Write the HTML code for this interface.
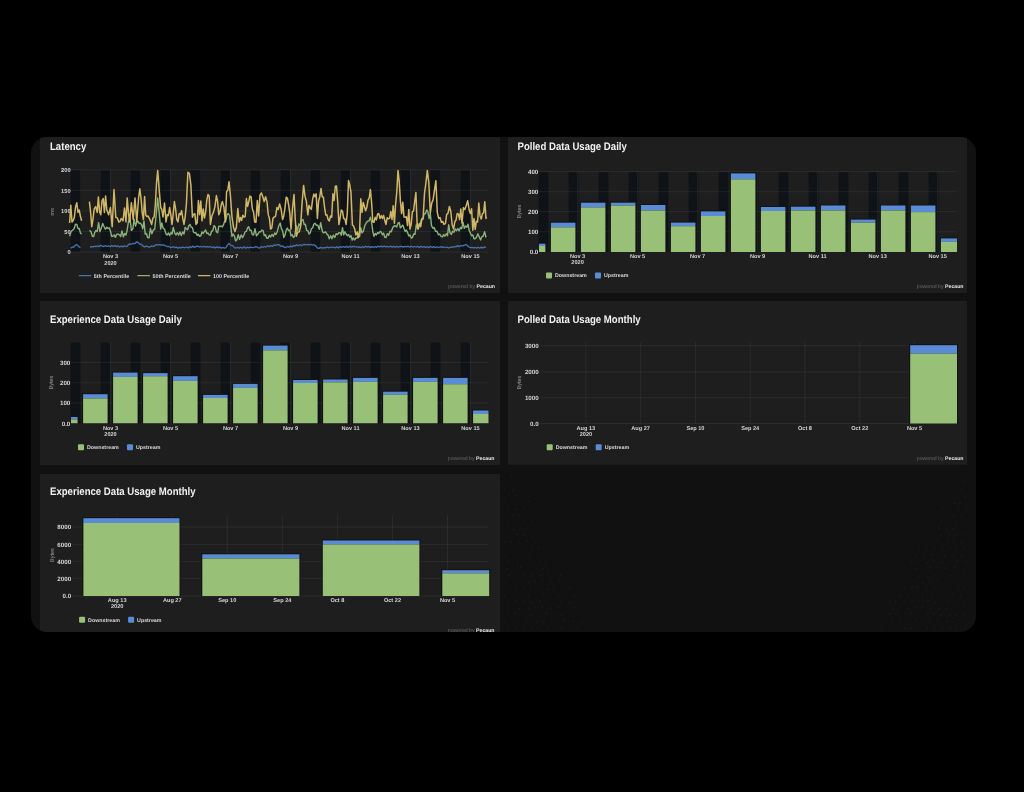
<!DOCTYPE html>
<html><head><meta charset="utf-8"><title>Dashboard</title>
<style>html,body{margin:0;padding:0;background:#000;width:1024px;height:792px;overflow:hidden}svg{display:block;filter:blur(0.6px)}text{text-rendering:geometricPrecision}</style>
</head><body>
<svg width="1024" height="792" viewBox="0 0 1024 792" font-family='"Liberation Sans", sans-serif'><defs><clipPath id="cc"><rect x="31" y="137" width="945" height="495" rx="16" ry="16"/></clipPath></defs><rect x="0.00" y="0.00" width="1024.00" height="792.00" fill="#000000" /><g clip-path="url(#cc)"><rect x="31.00" y="137.00" width="945.00" height="495.00" fill="#111111" /><g fill="#1d1d1d"><circle cx="511.8" cy="476.0" r="0.8"/><circle cx="509.3" cy="481.6" r="0.8"/><circle cx="964.7" cy="481.5" r="0.8"/><circle cx="503.9" cy="489.5" r="0.8"/><circle cx="513.3" cy="490.3" r="0.8"/><circle cx="961.4" cy="488.8" r="0.8"/><circle cx="509.4" cy="494.9" r="0.8"/><circle cx="516.5" cy="495.6" r="0.8"/><circle cx="950.8" cy="496.1" r="0.8"/><circle cx="965.1" cy="496.4" r="0.8"/><circle cx="504.3" cy="502.1" r="0.8"/><circle cx="528.5" cy="501.4" r="0.8"/><circle cx="954.0" cy="503.4" r="0.8"/><circle cx="960.0" cy="503.3" r="0.8"/><circle cx="508.8" cy="509.4" r="0.8"/><circle cx="515.7" cy="509.4" r="0.8"/><circle cx="524.5" cy="508.5" r="0.8"/><circle cx="942.6" cy="508.5" r="0.8"/><circle cx="958.1" cy="510.0" r="0.8"/><circle cx="965.9" cy="509.0" r="0.8"/><circle cx="512.6" cy="515.1" r="0.8"/><circle cx="519.0" cy="515.5" r="0.8"/><circle cx="528.1" cy="514.8" r="0.8"/><circle cx="946.2" cy="514.7" r="0.8"/><circle cx="954.1" cy="516.4" r="0.8"/><circle cx="961.6" cy="516.6" r="0.8"/><circle cx="507.9" cy="522.7" r="0.8"/><circle cx="517.2" cy="521.5" r="0.8"/><circle cx="523.0" cy="521.6" r="0.8"/><circle cx="532.6" cy="521.9" r="0.8"/><circle cx="941.5" cy="521.8" r="0.8"/><circle cx="956.9" cy="522.4" r="0.8"/><circle cx="965.8" cy="521.7" r="0.8"/><circle cx="513.6" cy="529.8" r="0.8"/><circle cx="520.1" cy="528.0" r="0.8"/><circle cx="528.1" cy="528.1" r="0.8"/><circle cx="930.7" cy="528.2" r="0.8"/><circle cx="939.0" cy="528.0" r="0.8"/><circle cx="946.3" cy="529.6" r="0.8"/><circle cx="953.2" cy="528.5" r="0.8"/><circle cx="517.0" cy="534.3" r="0.8"/><circle cx="523.7" cy="534.9" r="0.8"/><circle cx="532.8" cy="536.0" r="0.8"/><circle cx="941.0" cy="535.2" r="0.8"/><circle cx="949.3" cy="535.0" r="0.8"/><circle cx="956.4" cy="535.2" r="0.8"/><circle cx="965.2" cy="534.8" r="0.8"/><circle cx="504.2" cy="542.2" r="0.8"/><circle cx="511.5" cy="541.7" r="0.8"/><circle cx="519.1" cy="542.0" r="0.8"/><circle cx="527.2" cy="540.9" r="0.8"/><circle cx="534.8" cy="542.4" r="0.8"/><circle cx="544.1" cy="541.7" r="0.8"/><circle cx="937.3" cy="540.9" r="0.8"/><circle cx="947.0" cy="541.1" r="0.8"/><circle cx="953.5" cy="542.0" r="0.8"/><circle cx="961.7" cy="542.8" r="0.8"/><circle cx="509.4" cy="549.8" r="0.8"/><circle cx="517.1" cy="547.8" r="0.8"/><circle cx="531.2" cy="547.4" r="0.8"/><circle cx="538.7" cy="547.9" r="0.8"/><circle cx="919.6" cy="549.7" r="0.8"/><circle cx="926.5" cy="549.8" r="0.8"/><circle cx="934.1" cy="548.9" r="0.8"/><circle cx="942.9" cy="549.5" r="0.8"/><circle cx="949.8" cy="547.7" r="0.8"/><circle cx="957.1" cy="549.0" r="0.8"/><circle cx="964.2" cy="548.8" r="0.8"/><circle cx="505.3" cy="555.1" r="0.8"/><circle cx="529.0" cy="555.0" r="0.8"/><circle cx="915.3" cy="556.3" r="0.8"/><circle cx="923.4" cy="554.6" r="0.8"/><circle cx="931.5" cy="554.6" r="0.8"/><circle cx="939.0" cy="556.0" r="0.8"/><circle cx="944.8" cy="556.2" r="0.8"/><circle cx="953.1" cy="555.7" r="0.8"/><circle cx="962.0" cy="556.3" r="0.8"/><circle cx="508.5" cy="561.7" r="0.8"/><circle cx="517.5" cy="562.9" r="0.8"/><circle cx="539.6" cy="561.1" r="0.8"/><circle cx="545.9" cy="561.5" r="0.8"/><circle cx="911.6" cy="561.2" r="0.8"/><circle cx="918.0" cy="561.6" r="0.8"/><circle cx="927.0" cy="562.9" r="0.8"/><circle cx="934.1" cy="561.3" r="0.8"/><circle cx="941.6" cy="561.8" r="0.8"/><circle cx="956.6" cy="561.2" r="0.8"/><circle cx="965.7" cy="561.6" r="0.8"/><circle cx="506.2" cy="569.2" r="0.8"/><circle cx="520.8" cy="567.3" r="0.8"/><circle cx="543.6" cy="568.2" r="0.8"/><circle cx="558.8" cy="568.1" r="0.8"/><circle cx="916.5" cy="568.9" r="0.8"/><circle cx="930.0" cy="567.2" r="0.8"/><circle cx="937.7" cy="567.8" r="0.8"/><circle cx="945.3" cy="567.9" r="0.8"/><circle cx="954.3" cy="567.6" r="0.8"/><circle cx="508.9" cy="575.4" r="0.8"/><circle cx="515.3" cy="576.0" r="0.8"/><circle cx="523.9" cy="574.7" r="0.8"/><circle cx="531.8" cy="574.6" r="0.8"/><circle cx="540.3" cy="575.4" r="0.8"/><circle cx="547.0" cy="574.1" r="0.8"/><circle cx="560.9" cy="575.2" r="0.8"/><circle cx="919.0" cy="576.2" r="0.8"/><circle cx="927.8" cy="576.2" r="0.8"/><circle cx="935.1" cy="575.7" r="0.8"/><circle cx="949.8" cy="575.6" r="0.8"/><circle cx="964.5" cy="574.0" r="0.8"/><circle cx="505.9" cy="582.7" r="0.8"/><circle cx="528.7" cy="582.1" r="0.8"/><circle cx="534.5" cy="581.1" r="0.8"/><circle cx="542.6" cy="580.5" r="0.8"/><circle cx="550.7" cy="581.7" r="0.8"/><circle cx="559.3" cy="580.6" r="0.8"/><circle cx="923.1" cy="582.7" r="0.8"/><circle cx="930.1" cy="582.4" r="0.8"/><circle cx="937.5" cy="580.9" r="0.8"/><circle cx="515.8" cy="589.2" r="0.8"/><circle cx="524.7" cy="588.5" r="0.8"/><circle cx="530.6" cy="588.6" r="0.8"/><circle cx="547.4" cy="589.4" r="0.8"/><circle cx="553.3" cy="589.1" r="0.8"/><circle cx="569.6" cy="587.9" r="0.8"/><circle cx="904.4" cy="588.6" r="0.8"/><circle cx="912.1" cy="587.3" r="0.8"/><circle cx="918.0" cy="587.2" r="0.8"/><circle cx="925.9" cy="589.3" r="0.8"/><circle cx="934.6" cy="587.8" r="0.8"/><circle cx="941.5" cy="587.5" r="0.8"/><circle cx="949.4" cy="588.0" r="0.8"/><circle cx="957.9" cy="588.7" r="0.8"/><circle cx="964.6" cy="588.1" r="0.8"/><circle cx="504.5" cy="595.5" r="0.8"/><circle cx="528.2" cy="595.4" r="0.8"/><circle cx="543.4" cy="594.1" r="0.8"/><circle cx="558.0" cy="595.4" r="0.8"/><circle cx="565.6" cy="596.0" r="0.8"/><circle cx="573.6" cy="595.6" r="0.8"/><circle cx="901.0" cy="595.8" r="0.8"/><circle cx="907.5" cy="595.3" r="0.8"/><circle cx="922.7" cy="594.1" r="0.8"/><circle cx="931.1" cy="593.8" r="0.8"/><circle cx="938.4" cy="593.8" r="0.8"/><circle cx="947.0" cy="595.0" r="0.8"/><circle cx="952.4" cy="593.7" r="0.8"/><circle cx="960.5" cy="595.2" r="0.8"/><circle cx="508.3" cy="601.5" r="0.8"/><circle cx="515.9" cy="600.8" r="0.8"/><circle cx="523.4" cy="600.5" r="0.8"/><circle cx="531.1" cy="602.3" r="0.8"/><circle cx="539.7" cy="601.4" r="0.8"/><circle cx="546.7" cy="601.5" r="0.8"/><circle cx="560.9" cy="602.1" r="0.8"/><circle cx="570.5" cy="602.2" r="0.8"/><circle cx="889.8" cy="601.8" r="0.8"/><circle cx="895.8" cy="600.9" r="0.8"/><circle cx="905.2" cy="601.8" r="0.8"/><circle cx="912.1" cy="601.4" r="0.8"/><circle cx="918.9" cy="601.5" r="0.8"/><circle cx="928.0" cy="601.1" r="0.8"/><circle cx="934.6" cy="602.4" r="0.8"/><circle cx="942.0" cy="602.0" r="0.8"/><circle cx="948.9" cy="601.9" r="0.8"/><circle cx="964.7" cy="602.2" r="0.8"/><circle cx="519.1" cy="608.9" r="0.8"/><circle cx="528.6" cy="608.2" r="0.8"/><circle cx="534.9" cy="607.3" r="0.8"/><circle cx="542.2" cy="607.2" r="0.8"/><circle cx="550.8" cy="608.0" r="0.8"/><circle cx="558.5" cy="607.3" r="0.8"/><circle cx="574.5" cy="607.1" r="0.8"/><circle cx="893.0" cy="609.1" r="0.8"/><circle cx="899.1" cy="607.9" r="0.8"/><circle cx="907.9" cy="608.9" r="0.8"/><circle cx="915.7" cy="606.9" r="0.8"/><circle cx="922.2" cy="607.0" r="0.8"/><circle cx="930.8" cy="608.8" r="0.8"/><circle cx="938.6" cy="608.5" r="0.8"/><circle cx="946.0" cy="608.9" r="0.8"/><circle cx="508.7" cy="614.0" r="0.8"/><circle cx="515.3" cy="613.7" r="0.8"/><circle cx="531.6" cy="615.3" r="0.8"/><circle cx="539.0" cy="614.6" r="0.8"/><circle cx="546.6" cy="613.6" r="0.8"/><circle cx="554.2" cy="614.8" r="0.8"/><circle cx="561.7" cy="615.5" r="0.8"/><circle cx="889.6" cy="614.3" r="0.8"/><circle cx="896.0" cy="613.6" r="0.8"/><circle cx="910.7" cy="613.7" r="0.8"/><circle cx="927.4" cy="613.9" r="0.8"/><circle cx="934.3" cy="613.9" r="0.8"/><circle cx="941.5" cy="615.1" r="0.8"/><circle cx="950.3" cy="614.2" r="0.8"/><circle cx="956.2" cy="615.3" r="0.8"/><circle cx="964.7" cy="614.8" r="0.8"/><circle cx="504.6" cy="622.3" r="0.8"/><circle cx="526.8" cy="621.0" r="0.8"/><circle cx="536.4" cy="622.3" r="0.8"/><circle cx="543.7" cy="621.6" r="0.8"/><circle cx="550.6" cy="621.7" r="0.8"/><circle cx="564.7" cy="620.4" r="0.8"/><circle cx="573.3" cy="621.4" r="0.8"/><circle cx="581.8" cy="621.9" r="0.8"/><circle cx="885.6" cy="621.8" r="0.8"/><circle cx="892.3" cy="621.1" r="0.8"/><circle cx="900.9" cy="622.2" r="0.8"/><circle cx="916.6" cy="620.5" r="0.8"/><circle cx="922.5" cy="621.1" r="0.8"/><circle cx="929.9" cy="622.2" r="0.8"/><circle cx="937.1" cy="620.7" r="0.8"/><circle cx="946.9" cy="621.4" r="0.8"/><circle cx="952.8" cy="621.8" r="0.8"/><circle cx="960.0" cy="620.1" r="0.8"/><circle cx="509.0" cy="627.3" r="0.8"/><circle cx="516.4" cy="627.5" r="0.8"/><circle cx="523.5" cy="626.9" r="0.8"/><circle cx="532.5" cy="627.5" r="0.8"/><circle cx="538.2" cy="628.5" r="0.8"/><circle cx="547.4" cy="627.8" r="0.8"/><circle cx="562.1" cy="628.0" r="0.8"/><circle cx="577.4" cy="628.8" r="0.8"/><circle cx="882.3" cy="628.9" r="0.8"/><circle cx="904.6" cy="628.6" r="0.8"/><circle cx="910.5" cy="628.4" r="0.8"/><circle cx="927.2" cy="628.2" r="0.8"/><circle cx="934.7" cy="626.8" r="0.8"/><circle cx="942.7" cy="627.7" r="0.8"/><circle cx="950.0" cy="627.9" r="0.8"/><circle cx="957.0" cy="627.2" r="0.8"/><circle cx="964.6" cy="628.3" r="0.8"/></g><rect x="40.00" y="129.50" width="460.00" height="163.50" fill="#1e1e1e" /><rect x="508.00" y="129.50" width="459.00" height="163.50" fill="#1e1e1e" /><rect x="40.00" y="301.00" width="460.00" height="164.00" fill="#1e1e1e" /><rect x="508.00" y="301.00" width="459.00" height="163.80" fill="#1e1e1e" /><rect x="40.00" y="474.00" width="460.00" height="164.00" fill="#1e1e1e" /><text transform="translate(50.00,150.00) scale(1,1.14)" x="0" y="0" font-size="9.6" fill="#f2f2f2" font-weight="bold">Latency</text><text transform="translate(517.50,149.90) scale(1,1.14)" x="0" y="0" font-size="9.6" fill="#f2f2f2" font-weight="bold">Polled Data Usage Daily</text><text transform="translate(50.00,322.80) scale(1,1.14)" x="0" y="0" font-size="9.6" fill="#f2f2f2" font-weight="bold">Experience Data Usage Daily</text><text transform="translate(517.50,322.80) scale(1,1.14)" x="0" y="0" font-size="9.6" fill="#f2f2f2" font-weight="bold">Polled Data Usage Monthly</text><text transform="translate(50.00,494.80) scale(1,1.14)" x="0" y="0" font-size="9.6" fill="#f2f2f2" font-weight="bold">Experience Data Usage Monthly</text><text x="495.00" y="288.00" font-size="5.2" text-anchor="end"><tspan fill="#6a6a6a">powered by </tspan><tspan fill="#e8e8e8" font-weight="bold">Pecaun</tspan></text><text x="963.50" y="288.00" font-size="5.2" text-anchor="end"><tspan fill="#6a6a6a">powered by </tspan><tspan fill="#e8e8e8" font-weight="bold">Pecaun</tspan></text><text x="494.50" y="459.80" font-size="5.2" text-anchor="end"><tspan fill="#6a6a6a">powered by </tspan><tspan fill="#e8e8e8" font-weight="bold">Pecaun</tspan></text><text x="963.50" y="459.80" font-size="5.2" text-anchor="end"><tspan fill="#6a6a6a">powered by </tspan><tspan fill="#e8e8e8" font-weight="bold">Pecaun</tspan></text><text x="494.50" y="632.00" font-size="5.2" text-anchor="end"><tspan fill="#6a6a6a">powered by </tspan><tspan fill="#e8e8e8" font-weight="bold">Pecaun</tspan></text><rect x="70.70" y="170.40" width="9.40" height="81.60" fill="#0f1318" /><rect x="100.70" y="170.40" width="9.40" height="81.60" fill="#0f1318" /><rect x="130.70" y="170.40" width="9.40" height="81.60" fill="#0f1318" /><rect x="160.70" y="170.40" width="9.40" height="81.60" fill="#0f1318" /><rect x="190.70" y="170.40" width="9.40" height="81.60" fill="#0f1318" /><rect x="220.70" y="170.40" width="9.40" height="81.60" fill="#0f1318" /><rect x="250.70" y="170.40" width="9.40" height="81.60" fill="#0f1318" /><rect x="280.70" y="170.40" width="9.40" height="81.60" fill="#0f1318" /><rect x="310.70" y="170.40" width="9.40" height="81.60" fill="#0f1318" /><rect x="340.70" y="170.40" width="9.40" height="81.60" fill="#0f1318" /><rect x="370.70" y="170.40" width="9.40" height="81.60" fill="#0f1318" /><rect x="400.70" y="170.40" width="9.40" height="81.60" fill="#0f1318" /><rect x="430.70" y="170.40" width="9.40" height="81.60" fill="#0f1318" /><rect x="460.70" y="170.40" width="9.40" height="81.60" fill="#0f1318" /><line x1="68.50" y1="231.45" x2="488.00" y2="231.45" stroke="rgba(215,235,215,0.085)" stroke-width="0.8" /><line x1="68.50" y1="210.90" x2="488.00" y2="210.90" stroke="rgba(215,235,215,0.085)" stroke-width="0.8" /><line x1="68.50" y1="190.35" x2="488.00" y2="190.35" stroke="rgba(215,235,215,0.085)" stroke-width="0.8" /><line x1="68.50" y1="169.80" x2="488.00" y2="169.80" stroke="rgba(215,235,215,0.085)" stroke-width="0.8" /><line x1="110.50" y1="169.80" x2="110.50" y2="252.00" stroke="rgba(215,235,215,0.085)" stroke-width="0.8" /><line x1="170.50" y1="169.80" x2="170.50" y2="252.00" stroke="rgba(215,235,215,0.085)" stroke-width="0.8" /><line x1="230.50" y1="169.80" x2="230.50" y2="252.00" stroke="rgba(215,235,215,0.085)" stroke-width="0.8" /><line x1="290.50" y1="169.80" x2="290.50" y2="252.00" stroke="rgba(215,235,215,0.085)" stroke-width="0.8" /><line x1="350.50" y1="169.80" x2="350.50" y2="252.00" stroke="rgba(215,235,215,0.085)" stroke-width="0.8" /><line x1="410.50" y1="169.80" x2="410.50" y2="252.00" stroke="rgba(215,235,215,0.085)" stroke-width="0.8" /><line x1="470.50" y1="169.80" x2="470.50" y2="252.00" stroke="rgba(215,235,215,0.085)" stroke-width="0.8" /><line x1="71.00" y1="252.00" x2="488.00" y2="252.00" stroke="rgba(215,235,215,0.085)" stroke-width="0.8" /><text x="70.60" y="172.00" font-size="5.7" fill="#d8d8d8" text-anchor="end" font-weight="bold" >200</text><text x="70.60" y="192.55" font-size="5.7" fill="#d8d8d8" text-anchor="end" font-weight="bold" >150</text><text x="70.60" y="213.10" font-size="5.7" fill="#d8d8d8" text-anchor="end" font-weight="bold" >100</text><text x="70.60" y="233.65" font-size="5.7" fill="#d8d8d8" text-anchor="end" font-weight="bold" >50</text><text x="70.60" y="254.20" font-size="5.7" fill="#d8d8d8" text-anchor="end" font-weight="bold" >0</text><text x="52.30" y="211.70" font-size="5.5" fill="#a0a0a0" text-anchor="middle" transform="rotate(-90 52.30 211.70)" dy="2">ms</text><text x="110.50" y="258.00" font-size="5.6" fill="#d8d8d8" text-anchor="middle" font-weight="bold" >Nov 3</text><text x="170.50" y="258.00" font-size="5.6" fill="#d8d8d8" text-anchor="middle" font-weight="bold" >Nov 5</text><text x="230.50" y="258.00" font-size="5.6" fill="#d8d8d8" text-anchor="middle" font-weight="bold" >Nov 7</text><text x="290.50" y="258.00" font-size="5.6" fill="#d8d8d8" text-anchor="middle" font-weight="bold" >Nov 9</text><text x="350.50" y="258.00" font-size="5.6" fill="#d8d8d8" text-anchor="middle" font-weight="bold" >Nov 11</text><text x="410.50" y="258.00" font-size="5.6" fill="#d8d8d8" text-anchor="middle" font-weight="bold" >Nov 13</text><text x="470.50" y="258.00" font-size="5.6" fill="#d8d8d8" text-anchor="middle" font-weight="bold" >Nov 15</text><text x="110.50" y="264.60" font-size="5.6" fill="#d8d8d8" text-anchor="middle" font-weight="bold" >2020</text><path d="M70.8,248.3L72.3,247.0L73.8,247.1L75.3,245.1L76.8,244.7L78.6,246.4L80.4,247.7M90.0,247.0L91.5,246.7L93.0,246.9L94.5,246.2L96.0,246.7L97.5,245.8L99.0,246.7L100.5,245.3L102.0,245.9L103.6,246.6L105.2,245.7L106.8,246.4L108.4,245.8L110.0,246.7L111.6,245.6L113.2,246.4L114.8,245.6L116.4,246.6L118.0,245.8L119.6,247.0L121.2,246.1L122.8,246.9L124.4,245.8L126.0,246.5L127.2,246.4L128.4,244.7L130.0,243.9L131.6,244.2L133.2,243.3L134.8,243.7L136.4,242.0L138.0,242.3L139.6,244.1L141.2,244.2L142.8,245.9L144.6,246.9L146.4,246.0L148.2,246.9L150.0,247.0L151.8,245.9L153.6,246.5L155.4,244.9L157.2,244.7L158.6,244.9L160.1,244.6L161.6,245.1L163.0,245.0L164.5,245.3L166.0,246.0L167.5,246.7L169.0,246.4L170.5,247.5L172.0,247.3L173.5,246.7L175.0,247.7L176.5,247.1L178.0,248.3L179.5,247.3L181.0,247.9L182.5,247.1L184.0,247.7L185.5,247.7L187.0,247.0L188.5,248.0L190.0,246.6L191.5,247.5L193.0,246.1L194.5,247.4L196.0,246.5L197.6,246.2L199.2,246.9L200.7,246.5L202.3,247.0L203.9,246.4L205.5,247.0L207.1,246.7L208.6,247.2L210.2,246.5L211.8,247.5L213.4,246.8L214.9,248.0L216.5,246.9L218.1,247.6L219.7,247.1L221.3,248.2L222.8,247.4L224.4,248.1L226.0,247.7L227.5,245.1L229.0,243.5L230.8,245.4L232.6,245.6L234.4,247.7L236.0,248.0L237.7,247.4L239.3,248.1L240.9,247.2L242.6,248.2L244.2,246.8L245.8,248.2L247.5,247.1L249.1,247.8L250.7,247.2L252.4,247.7L254.0,247.3L256.0,246.7L258.0,247.7L259.6,248.2L261.2,246.5L262.8,247.3L264.5,246.5L266.1,247.1L267.7,245.6L269.3,246.7L270.9,245.6L272.5,246.4L274.2,244.8L275.8,245.4L277.4,244.6L279.0,244.7L280.7,246.3L282.3,245.9L284.0,247.1L285.6,247.5L287.2,246.5L288.8,247.2L290.3,246.0L291.9,246.9L293.5,245.5L295.1,245.9L296.7,244.7L298.2,245.8L299.8,244.7L301.4,245.6L303.0,244.7L304.6,244.4L306.1,245.0L307.7,244.4L309.3,244.9L310.9,244.3L312.4,245.2L314.0,244.7L315.7,245.9L317.4,248.0L319.0,248.4L320.6,247.4L322.3,248.2L323.9,247.6L325.5,247.9L327.1,247.0L328.8,247.9L330.4,247.0L332.0,247.6L333.6,247.0L335.2,247.9L336.9,246.7L338.5,247.9L340.1,246.5L341.7,247.5L343.3,246.5L345.0,247.4L346.6,246.2L348.2,247.5L349.8,246.2L351.5,247.3L353.1,246.3L354.7,246.5L356.0,247.0L357.6,247.2L359.1,246.8L360.7,247.6L362.3,246.7L363.9,247.5L365.4,246.2L367.0,247.2L368.6,246.4L370.1,247.6L371.7,246.6L373.3,247.3L374.9,246.5L376.4,247.4L378.0,246.2L379.6,246.9L381.1,246.2L382.7,246.9L384.3,246.0L385.9,246.9L387.4,246.5L389.0,247.0L390.6,246.2L392.1,247.3L393.7,246.3L395.3,247.1L396.9,246.3L398.4,247.1L400.0,246.5L401.6,246.3L403.2,247.1L404.8,246.4L406.5,246.8L408.1,246.2L409.7,247.2L411.3,246.3L412.9,247.2L414.5,246.5L416.1,247.0L417.7,246.4L419.4,247.5L421.0,246.4L422.6,247.2L424.2,246.6L425.8,247.5L427.4,246.7L429.0,247.7L430.6,246.3L432.3,247.5L433.9,246.6L435.5,247.7L437.1,246.7L438.7,247.7L440.3,246.7L441.9,247.4L443.5,247.0L445.2,247.5L446.8,247.0L448.4,248.0L450.0,247.3L451.5,246.8L453.0,247.3L454.5,246.5L456.0,246.9L457.5,245.6L459.0,246.6L460.5,245.7L462.0,245.9L463.8,245.5L465.6,244.7L467.2,245.2L468.8,247.0L470.4,247.7L472.0,247.5L473.5,247.9L475.1,247.5L476.6,248.1L478.2,247.2L479.8,248.3L481.3,247.1L482.9,248.1L484.4,246.9L486.0,247.7" fill="none" stroke="#4872ad" stroke-width="1.3" stroke-linejoin="round"/><path d="M69.6,236.3L71.2,231.4L72.8,230.0L74.1,228.7L75.5,224.3L76.8,224.4L78.0,228.5L79.2,228.5L80.4,232.9L81.6,234.0M89.4,230.4L90.9,231.5L92.4,236.3L93.6,236.6L94.8,232.3L96.0,230.4L97.2,231.5L98.6,222.7L99.9,231.7L101.3,228.1L102.7,223.5L104.1,226.7L105.4,229.2L106.8,227.2L108.0,228.5L109.2,227.8L110.4,230.9L111.6,236.2L112.8,236.3L114.1,234.9L115.4,237.3L116.8,234.1L118.1,234.1L119.4,234.8L120.7,236.5L122.0,231.0L123.4,236.9L124.7,233.5L126.0,235.0L127.2,229.8L128.4,222.0L129.9,217.5L131.4,230.4L132.8,229.1L134.1,219.1L135.5,226.0L136.8,222.0L138.0,221.2L139.2,223.6L140.4,223.2L141.6,224.8L142.8,228.7L144.0,221.2L145.2,234.1L146.4,233.4L147.6,237.5L149.0,237.8L150.4,228.5L151.9,233.7L153.3,230.1L154.7,229.1L156.2,214.5L157.7,198.0L159.2,213.1L160.7,229.1L161.8,222.9L163.0,228.0L164.5,229.3L166.0,234.0L167.2,235.0L168.4,232.9L169.6,235.5L170.8,232.8L172.0,234.0L173.3,227.5L174.7,233.1L176.0,234.9L177.3,232.7L178.7,235.1L180.0,232.0L181.3,235.6L182.7,231.9L184.0,234.0L185.2,227.3L186.4,228.9L187.6,229.8L188.8,225.8L190.0,224.4L191.2,227.2L192.4,227.6L193.6,232.4L194.8,232.8L196.0,232.8L197.2,235.5L198.4,234.3L199.6,236.3L200.8,235.8L202.0,231.9L203.2,233.5L204.4,231.5L205.6,230.0L206.8,233.6L208.0,233.0L209.2,234.9L210.4,235.0L211.6,231.0L212.8,230.7L214.0,225.6L215.2,226.8L216.4,231.8L217.6,232.8L218.8,226.1L220.0,226.4L221.2,226.2L222.4,226.9L223.6,224.4L224.8,220.8L225.9,220.2L227.1,214.4L228.3,213.6L229.5,215.3L230.8,226.7L232.0,236.3L233.2,234.1L234.4,236.0L235.6,240.9L236.8,239.9L238.2,234.8L239.6,239.3L241.1,234.9L242.5,237.6L243.9,235.1L245.1,231.8L246.3,231.4L247.5,228.0L248.7,226.7L249.9,230.4L251.1,230.2L252.3,234.6L253.5,235.1L255.0,228.8L256.5,235.8L258.0,234.0L259.3,231.8L260.7,231.8L262.0,230.0L263.1,230.7L264.3,235.6L265.5,234.7L266.6,238.0L267.9,238.4L269.3,235.3L270.6,237.0L272.0,234.4L273.3,236.4L274.7,232.9L276.0,234.5L277.4,231.2L278.8,225.7L280.2,223.0L281.4,228.6L282.6,230.9L283.8,237.5L285.0,235.1L286.2,230.2L287.4,228.0L288.6,230.7L289.8,230.0L291.0,235.8L292.2,234.8L293.4,237.5L294.8,236.1L296.1,225.7L297.5,230.6L298.9,223.8L300.3,225.8L301.6,220.2L303.0,219.6L304.2,224.7L305.4,224.3L306.6,230.3L307.8,230.6L309.0,234.0L310.2,232.9L311.4,228.7L312.6,228.0L313.8,224.3L315.0,223.2L316.4,225.3L317.8,225.3L319.3,229.4L320.7,222.7L322.1,230.4L323.3,232.9L324.5,232.4L325.7,231.9L326.9,234.1L328.1,235.1L329.3,238.7L330.7,235.8L332.0,238.8L333.4,235.1L334.8,237.5L336.2,233.6L337.5,234.6L338.9,232.8L340.1,232.6L341.3,235.3L342.5,227.6L343.7,234.9L344.9,231.7L346.1,234.0L347.3,235.7L348.6,234.4L349.8,237.3L351.0,235.6L352.2,240.0L353.5,238.0L354.7,239.9L356.0,238.0L357.2,238.0L358.4,235.3L359.6,236.6L360.8,227.8L362.0,232.8L363.4,231.2L364.8,225.6L366.2,223.0L367.6,221.1L369.0,221.0L370.4,217.2L371.6,222.4L372.8,231.6L374.0,236.3L375.2,233.4L376.4,235.0L377.6,232.5L378.8,233.6L380.0,231.5L381.2,231.9L382.4,234.8L383.6,233.1L384.8,237.3L386.0,237.5L387.3,233.7L388.7,235.2L390.0,231.1L391.3,231.8L392.7,227.7L394.0,226.0L395.3,225.7L396.7,226.9L398.0,223.2L399.2,222.5L400.4,227.9L401.6,226.5L402.8,225.1L404.0,228.6L405.2,231.5L406.4,230.0L407.6,232.6L408.8,236.1L410.0,235.0L411.2,238.1L412.4,237.5L413.7,234.0L415.0,234.3L416.3,224.8L417.6,228.9L418.9,224.4L420.2,224.2L421.5,219.1L422.8,219.6L424.1,213.6L425.4,213.7L426.7,210.0L427.9,211.7L429.1,218.6L430.3,213.5L431.5,225.6L432.9,228.3L434.2,227.5L435.6,231.4L437.0,231.2L438.4,234.8L439.7,234.2L441.1,236.3L442.4,236.9L443.6,234.6L444.9,236.2L446.2,233.7L447.5,235.7L448.7,224.8L450.0,232.8L451.3,234.4L452.6,231.1L453.9,232.2L455.2,229.0L456.5,230.7L457.8,228.6L459.1,230.8L460.4,227.5L461.7,228.8L463.0,222.2L464.3,228.3L465.6,226.0L466.8,227.2L468.0,224.2L469.2,230.6L470.4,233.0L471.6,235.8L472.8,234.9L474.0,238.7L475.2,238.7L476.6,237.0L477.9,233.7L479.2,236.9L480.6,239.9L481.9,236.7L483.3,236.0L484.6,231.6L486.0,237.5" fill="none" stroke="#8ab37b" stroke-width="1.4" stroke-linejoin="round"/><path d="M69.6,223.0L70.8,205.2L72.0,222.0L73.2,220.6L74.4,217.0L75.6,206.6L76.8,202.8L78.0,212.4L79.2,210.0L80.4,216.3L81.6,220.7M89.4,201.6L90.6,212.1L91.8,226.7L93.0,219.0L94.2,208.8L95.7,206.6L97.2,212.4L98.4,196.9L99.6,211.6L100.8,214.8L102.0,200.7L103.2,198.5L104.4,212.4L105.6,195.9L106.8,210.0L108.6,214.8L110.4,207.6L112.2,226.7L114.0,189.6L115.8,217.2L117.3,217.9L118.8,222.0L120.0,221.5L121.2,218.4L123.0,220.8L124.5,208.0L126.0,222.0L127.2,198.0L128.4,212.4L129.6,222.0L131.4,202.8L133.2,219.6L135.0,198.0L136.8,222.0L138.6,198.0L139.8,188.8L141.0,198.0L142.2,212.6L143.4,219.6L144.6,196.5L145.7,214.8L146.9,216.6L148.1,216.0L149.9,219.6L151.7,224.4L152.9,218.0L154.1,217.2L155.3,205.2L156.5,183.3L157.7,170.4L159.2,190.1L160.7,207.6L161.8,209.5L163.0,217.0L164.5,203.0L166.0,222.0L167.2,214.6L168.4,215.6L169.6,207.6L170.8,214.6L172.0,224.4L173.2,214.0L174.4,201.6L175.6,209.0L176.8,219.6L178.0,221.9L179.2,213.5L180.4,214.8L181.6,210.7L182.8,218.4L184.0,224.4L185.2,216.6L186.4,204.0L187.9,172.3L189.4,173.4L190.9,185.2L192.4,217.2L193.6,214.3L194.8,213.6L196.0,224.4L197.2,222.7L198.4,200.6L199.6,214.8L200.8,201.0L202.0,220.8L203.2,209.1L204.4,218.0L205.6,212.4L206.8,200.1L208.0,194.4L209.2,196.0L210.4,224.4L211.9,215.8L213.4,212.4L214.9,206.9L216.4,195.6L217.6,201.4L218.8,214.8L220.0,212.0L221.2,205.1L222.4,201.6L223.9,207.1L225.4,222.0L226.6,191.6L227.8,190.2L229.0,181.8L230.5,196.8L232.0,217.2L233.5,227.2L235.0,231.5L236.4,227.0L237.8,208.5L239.2,222.0L240.4,217.5L241.6,220.4L242.8,215.2L244.0,217.2L245.2,216.5L246.4,198.6L247.6,206.4L248.8,201.6L249.9,196.0L251.1,196.8L252.3,208.7L253.5,211.9L254.7,222.0L256.0,222.2L257.3,200.5L258.6,216.0L260.0,195.2L261.4,193.0L262.8,196.8L264.2,201.6L265.6,196.8L267.0,201.6L268.2,214.4L269.4,218.4L270.6,229.1L271.8,228.0L273.0,218.2L274.2,217.2L275.6,216.2L276.9,207.6L278.2,209.5L279.6,204.0L281.1,209.2L282.6,219.6L283.8,215.7L285.0,207.8L286.2,197.2L287.4,198.0L288.6,204.6L289.8,213.4L291.0,229.1L292.5,208.7L294.0,194.4L295.2,218.4L296.4,236.3L297.8,232.1L299.2,231.9L300.6,226.7L302.1,202.6L303.6,185.4L305.0,196.2L306.4,201.3L307.8,214.8L309.0,205.4L310.2,207.9L311.4,209.2L312.6,199.4L313.8,194.1L315.0,196.8L316.2,193.9L317.4,218.4L318.6,201.0L319.8,196.7L321.0,188.4L322.2,196.8L323.4,197.3L324.6,207.6L325.8,215.1L326.9,214.7L328.1,219.6L329.3,221.0L330.5,216.1L331.7,217.2L332.9,193.8L334.1,200.5L335.3,186.3L336.5,186.0L337.7,202.0L338.9,224.4L340.1,218.0L341.3,210.0L342.5,211.2L343.7,218.6L344.9,218.9L346.1,224.4L347.3,212.8L348.5,180.5L349.7,184.8L351.0,192.4L352.4,225.0L353.5,225.9L354.7,229.0L355.9,234.9L357.2,231.9L358.4,237.5L359.6,231.2L360.8,198.7L362.0,212.4L363.2,202.4L364.4,206.3L365.6,210.8L366.8,207.6L368.0,200.1L369.2,198.1L370.4,189.6L371.6,202.6L372.8,222.0L374.0,222.2L375.2,217.3L376.4,219.9L377.6,213.9L378.8,213.6L380.0,218.5L381.2,215.6L382.4,218.4L383.6,215.4L384.8,220.6L386.0,224.4L387.2,217.7L388.4,218.8L389.6,218.4L390.8,211.5L392.0,219.4L393.2,205.7L394.4,223.2L395.6,204.5L396.8,191.9L398.0,170.4L399.2,181.7L400.4,200.6L401.6,213.6L402.8,202.2L404.0,216.9L405.2,217.2L406.4,216.8L407.6,225.6L408.8,209.4L410.0,229.1L411.2,224.3L412.4,211.6L413.5,211.1L414.7,201.6L415.9,192.5L417.1,223.5L418.3,229.1L419.5,223.4L420.7,226.7L421.9,218.8L423.1,218.4L424.5,193.3L425.9,183.1L427.3,170.4L428.8,182.6L430.3,213.0L431.7,203.1L433.1,199.9L434.5,190.2L435.9,180.7L437.3,212.3L438.7,218.4L440.0,217.5L441.4,222.3L442.7,221.6L444.0,224.4L445.4,223.7L446.7,214.3L448.0,213.4L449.4,206.4L450.8,211.5L452.2,225.0L453.6,229.1L454.8,221.8L456.0,220.2L457.2,213.6L458.4,213.9L459.6,219.6L460.8,209.0L462.0,223.2L463.4,207.6L464.8,209.5L466.2,205.8L467.7,200.7L469.2,210.0L470.4,213.6L471.6,208.8L472.8,230.3L474.0,218.4L475.2,229.4L476.4,221.2L477.6,222.0L478.8,203.0L480.0,215.9L481.2,219.1L482.4,213.6L483.6,212.9L484.8,201.7L486.0,218.4L486.6,217.0" fill="none" stroke="#d0b766" stroke-width="1.5" stroke-linejoin="round"/><line x1="78.80" y1="275.70" x2="91.30" y2="275.70" stroke="#4872ad" stroke-width="1.3" /><text x="93.80" y="277.70" font-size="5.4" fill="#d8d8d8" text-anchor="start" font-weight="bold" >5th Percentile</text><line x1="137.40" y1="275.70" x2="149.90" y2="275.70" stroke="#8ab37b" stroke-width="1.3" /><text x="152.40" y="277.70" font-size="5.4" fill="#d8d8d8" text-anchor="start" font-weight="bold" >50th Percentile</text><line x1="197.90" y1="275.70" x2="210.40" y2="275.70" stroke="#d0b766" stroke-width="1.3" /><text x="212.90" y="277.70" font-size="5.4" fill="#d8d8d8" text-anchor="start" font-weight="bold" >100 Percentile</text><rect x="538.70" y="172.20" width="9.60" height="79.80" fill="#0f1318" /><rect x="568.70" y="172.20" width="9.60" height="79.80" fill="#0f1318" /><rect x="598.70" y="172.20" width="9.60" height="79.80" fill="#0f1318" /><rect x="628.70" y="172.20" width="9.60" height="79.80" fill="#0f1318" /><rect x="658.70" y="172.20" width="9.60" height="79.80" fill="#0f1318" /><rect x="688.70" y="172.20" width="9.60" height="79.80" fill="#0f1318" /><rect x="718.70" y="172.20" width="9.60" height="79.80" fill="#0f1318" /><rect x="748.70" y="172.20" width="9.60" height="79.80" fill="#0f1318" /><rect x="778.70" y="172.20" width="9.60" height="79.80" fill="#0f1318" /><rect x="808.70" y="172.20" width="9.60" height="79.80" fill="#0f1318" /><rect x="838.70" y="172.20" width="9.60" height="79.80" fill="#0f1318" /><rect x="868.70" y="172.20" width="9.60" height="79.80" fill="#0f1318" /><rect x="898.70" y="172.20" width="9.60" height="79.80" fill="#0f1318" /><rect x="928.70" y="172.20" width="9.60" height="79.80" fill="#0f1318" /><line x1="536.50" y1="171.60" x2="957.00" y2="171.60" stroke="rgba(215,235,215,0.085)" stroke-width="0.8" /><line x1="536.50" y1="191.70" x2="957.00" y2="191.70" stroke="rgba(215,235,215,0.085)" stroke-width="0.8" /><line x1="536.50" y1="211.60" x2="957.00" y2="211.60" stroke="rgba(215,235,215,0.085)" stroke-width="0.8" /><line x1="536.50" y1="231.80" x2="957.00" y2="231.80" stroke="rgba(215,235,215,0.085)" stroke-width="0.8" /><line x1="577.60" y1="171.60" x2="577.60" y2="252.00" stroke="rgba(215,235,215,0.085)" stroke-width="0.8" /><line x1="637.60" y1="171.60" x2="637.60" y2="252.00" stroke="rgba(215,235,215,0.085)" stroke-width="0.8" /><line x1="697.60" y1="171.60" x2="697.60" y2="252.00" stroke="rgba(215,235,215,0.085)" stroke-width="0.8" /><line x1="757.60" y1="171.60" x2="757.60" y2="252.00" stroke="rgba(215,235,215,0.085)" stroke-width="0.8" /><line x1="817.60" y1="171.60" x2="817.60" y2="252.00" stroke="rgba(215,235,215,0.085)" stroke-width="0.8" /><line x1="877.60" y1="171.60" x2="877.60" y2="252.00" stroke="rgba(215,235,215,0.085)" stroke-width="0.8" /><line x1="937.60" y1="171.60" x2="937.60" y2="252.00" stroke="rgba(215,235,215,0.085)" stroke-width="0.8" /><clipPath id="pc539171"><rect x="539" y="151.6" width="418" height="100.4"/></clipPath><g clip-path="url(#pc539171)"><rect x="519.90" y="242.70" width="25.70" height="9.30" fill="#101214" /><rect x="520.90" y="243.70" width="24.50" height="2.30" fill="#5a8cd6" /><rect x="520.90" y="246.00" width="24.50" height="6.00" fill="#99c077" /><rect x="549.90" y="221.70" width="25.70" height="30.30" fill="#101214" /><rect x="550.90" y="222.70" width="24.50" height="4.60" fill="#5a8cd6" /><rect x="550.90" y="227.30" width="24.50" height="24.70" fill="#99c077" /><rect x="579.90" y="201.70" width="25.70" height="50.30" fill="#101214" /><rect x="580.90" y="202.70" width="24.50" height="4.70" fill="#5a8cd6" /><rect x="580.90" y="207.40" width="24.50" height="44.60" fill="#99c077" /><rect x="609.90" y="201.70" width="25.70" height="50.30" fill="#101214" /><rect x="610.90" y="202.70" width="24.50" height="2.80" fill="#5a8cd6" /><rect x="610.90" y="205.50" width="24.50" height="46.50" fill="#99c077" /><rect x="639.90" y="204.00" width="25.70" height="48.00" fill="#101214" /><rect x="640.90" y="205.00" width="24.50" height="5.50" fill="#5a8cd6" /><rect x="640.90" y="210.50" width="24.50" height="41.50" fill="#99c077" /><rect x="669.90" y="221.60" width="25.70" height="30.40" fill="#101214" /><rect x="670.90" y="222.60" width="24.50" height="3.60" fill="#5a8cd6" /><rect x="670.90" y="226.20" width="24.50" height="25.80" fill="#99c077" /><rect x="699.90" y="210.40" width="25.70" height="41.60" fill="#101214" /><rect x="700.90" y="211.40" width="24.50" height="4.60" fill="#5a8cd6" /><rect x="700.90" y="216.00" width="24.50" height="36.00" fill="#99c077" /><rect x="729.90" y="172.40" width="25.70" height="79.60" fill="#101214" /><rect x="730.90" y="173.40" width="24.50" height="5.90" fill="#5a8cd6" /><rect x="730.90" y="179.30" width="24.50" height="72.70" fill="#99c077" /><rect x="759.90" y="206.00" width="25.70" height="46.00" fill="#101214" /><rect x="760.90" y="207.00" width="24.50" height="4.00" fill="#5a8cd6" /><rect x="760.90" y="211.00" width="24.50" height="41.00" fill="#99c077" /><rect x="789.90" y="205.70" width="25.70" height="46.30" fill="#101214" /><rect x="790.90" y="206.70" width="24.50" height="3.80" fill="#5a8cd6" /><rect x="790.90" y="210.50" width="24.50" height="41.50" fill="#99c077" /><rect x="819.90" y="204.50" width="25.70" height="47.50" fill="#101214" /><rect x="820.90" y="205.50" width="24.50" height="5.00" fill="#5a8cd6" /><rect x="820.90" y="210.50" width="24.50" height="41.50" fill="#99c077" /><rect x="849.90" y="218.60" width="25.70" height="33.40" fill="#101214" /><rect x="850.90" y="219.60" width="24.50" height="3.00" fill="#5a8cd6" /><rect x="850.90" y="222.60" width="24.50" height="29.40" fill="#99c077" /><rect x="879.90" y="204.50" width="25.70" height="47.50" fill="#101214" /><rect x="880.90" y="205.50" width="24.50" height="5.00" fill="#5a8cd6" /><rect x="880.90" y="210.50" width="24.50" height="41.50" fill="#99c077" /><rect x="909.90" y="204.50" width="25.70" height="47.50" fill="#101214" /><rect x="910.90" y="205.50" width="24.50" height="6.60" fill="#5a8cd6" /><rect x="910.90" y="212.10" width="24.50" height="39.90" fill="#99c077" /><rect x="939.90" y="237.40" width="25.70" height="14.60" fill="#101214" /><rect x="940.90" y="238.40" width="24.50" height="3.50" fill="#5a8cd6" /><rect x="940.90" y="241.90" width="24.50" height="10.10" fill="#99c077" /></g><text x="538.30" y="173.80" font-size="6.2" fill="#d8d8d8" text-anchor="end" font-weight="bold" >400</text><text x="538.30" y="193.90" font-size="6.2" fill="#d8d8d8" text-anchor="end" font-weight="bold" >300</text><text x="538.30" y="213.80" font-size="6.2" fill="#d8d8d8" text-anchor="end" font-weight="bold" >200</text><text x="538.30" y="234.00" font-size="6.2" fill="#d8d8d8" text-anchor="end" font-weight="bold" >100</text><text x="538.30" y="254.20" font-size="6.2" fill="#d8d8d8" text-anchor="end" font-weight="bold" >0.0</text><text x="577.60" y="257.50" font-size="5.6" fill="#d8d8d8" text-anchor="middle" font-weight="bold" >Nov 3</text><text x="637.60" y="257.50" font-size="5.6" fill="#d8d8d8" text-anchor="middle" font-weight="bold" >Nov 5</text><text x="697.60" y="257.50" font-size="5.6" fill="#d8d8d8" text-anchor="middle" font-weight="bold" >Nov 7</text><text x="757.60" y="257.50" font-size="5.6" fill="#d8d8d8" text-anchor="middle" font-weight="bold" >Nov 9</text><text x="817.60" y="257.50" font-size="5.6" fill="#d8d8d8" text-anchor="middle" font-weight="bold" >Nov 11</text><text x="877.60" y="257.50" font-size="5.6" fill="#d8d8d8" text-anchor="middle" font-weight="bold" >Nov 13</text><text x="937.60" y="257.50" font-size="5.6" fill="#d8d8d8" text-anchor="middle" font-weight="bold" >Nov 15</text><text x="577.60" y="264.10" font-size="5.6" fill="#d8d8d8" text-anchor="middle" font-weight="bold" >2020</text><rect x="546.00" y="272.40" width="6.00" height="6.00" fill="#99c077" rx="1"/><text x="555.00" y="277.40" font-size="5.3" fill="#d8d8d8" text-anchor="start" font-weight="bold" >Downstream</text><rect x="595.00" y="272.40" width="6.00" height="6.00" fill="#5a8cd6" rx="1"/><text x="604.00" y="277.40" font-size="5.3" fill="#d8d8d8" text-anchor="start" font-weight="bold" >Upstream</text><text x="519.00" y="211.50" font-size="5.5" fill="#a0a0a0" text-anchor="middle" transform="rotate(-90 519.00 211.50)" dy="2">Bytes</text><rect x="70.70" y="342.60" width="9.60" height="80.90" fill="#0f1318" /><rect x="100.70" y="342.60" width="9.60" height="80.90" fill="#0f1318" /><rect x="130.70" y="342.60" width="9.60" height="80.90" fill="#0f1318" /><rect x="160.70" y="342.60" width="9.60" height="80.90" fill="#0f1318" /><rect x="190.70" y="342.60" width="9.60" height="80.90" fill="#0f1318" /><rect x="220.70" y="342.60" width="9.60" height="80.90" fill="#0f1318" /><rect x="250.70" y="342.60" width="9.60" height="80.90" fill="#0f1318" /><rect x="280.70" y="342.60" width="9.60" height="80.90" fill="#0f1318" /><rect x="310.70" y="342.60" width="9.60" height="80.90" fill="#0f1318" /><rect x="340.70" y="342.60" width="9.60" height="80.90" fill="#0f1318" /><rect x="370.70" y="342.60" width="9.60" height="80.90" fill="#0f1318" /><rect x="400.70" y="342.60" width="9.60" height="80.90" fill="#0f1318" /><rect x="430.70" y="342.60" width="9.60" height="80.90" fill="#0f1318" /><rect x="460.70" y="342.60" width="9.60" height="80.90" fill="#0f1318" /><line x1="68.50" y1="362.60" x2="488.50" y2="362.60" stroke="rgba(215,235,215,0.085)" stroke-width="0.8" /><line x1="68.50" y1="382.80" x2="488.50" y2="382.80" stroke="rgba(215,235,215,0.085)" stroke-width="0.8" /><line x1="68.50" y1="403.00" x2="488.50" y2="403.00" stroke="rgba(215,235,215,0.085)" stroke-width="0.8" /><line x1="110.50" y1="342.00" x2="110.50" y2="423.50" stroke="rgba(215,235,215,0.085)" stroke-width="0.8" /><line x1="170.50" y1="342.00" x2="170.50" y2="423.50" stroke="rgba(215,235,215,0.085)" stroke-width="0.8" /><line x1="230.50" y1="342.00" x2="230.50" y2="423.50" stroke="rgba(215,235,215,0.085)" stroke-width="0.8" /><line x1="290.50" y1="342.00" x2="290.50" y2="423.50" stroke="rgba(215,235,215,0.085)" stroke-width="0.8" /><line x1="350.50" y1="342.00" x2="350.50" y2="423.50" stroke="rgba(215,235,215,0.085)" stroke-width="0.8" /><line x1="410.50" y1="342.00" x2="410.50" y2="423.50" stroke="rgba(215,235,215,0.085)" stroke-width="0.8" /><line x1="470.50" y1="342.00" x2="470.50" y2="423.50" stroke="rgba(215,235,215,0.085)" stroke-width="0.8" /><clipPath id="pc71342"><rect x="71" y="322" width="417.5" height="101.5"/></clipPath><g clip-path="url(#pc71342)"><rect x="52.10" y="416.00" width="25.70" height="7.50" fill="#101214" /><rect x="53.10" y="417.00" width="24.50" height="2.50" fill="#5a8cd6" /><rect x="53.10" y="419.50" width="24.50" height="4.00" fill="#99c077" /><rect x="82.10" y="393.20" width="25.70" height="30.30" fill="#101214" /><rect x="83.10" y="394.20" width="24.50" height="4.20" fill="#5a8cd6" /><rect x="83.10" y="398.40" width="24.50" height="25.10" fill="#99c077" /><rect x="112.10" y="371.60" width="25.70" height="51.90" fill="#101214" /><rect x="113.10" y="372.60" width="24.50" height="4.30" fill="#5a8cd6" /><rect x="113.10" y="376.90" width="24.50" height="46.60" fill="#99c077" /><rect x="142.10" y="372.10" width="25.70" height="51.40" fill="#101214" /><rect x="143.10" y="373.10" width="24.50" height="3.10" fill="#5a8cd6" /><rect x="143.10" y="376.20" width="24.50" height="47.30" fill="#99c077" /><rect x="172.10" y="375.20" width="25.70" height="48.30" fill="#101214" /><rect x="173.10" y="376.20" width="24.50" height="4.70" fill="#5a8cd6" /><rect x="173.10" y="380.90" width="24.50" height="42.60" fill="#99c077" /><rect x="202.10" y="393.90" width="25.70" height="29.60" fill="#101214" /><rect x="203.10" y="394.90" width="24.50" height="3.10" fill="#5a8cd6" /><rect x="203.10" y="398.00" width="24.50" height="25.50" fill="#99c077" /><rect x="232.10" y="382.90" width="25.70" height="40.60" fill="#101214" /><rect x="233.10" y="383.90" width="24.50" height="4.00" fill="#5a8cd6" /><rect x="233.10" y="387.90" width="24.50" height="35.60" fill="#99c077" /><rect x="262.10" y="344.60" width="25.70" height="78.90" fill="#101214" /><rect x="263.10" y="345.60" width="24.50" height="4.70" fill="#5a8cd6" /><rect x="263.10" y="350.30" width="24.50" height="73.20" fill="#99c077" /><rect x="292.10" y="379.00" width="25.70" height="44.50" fill="#101214" /><rect x="293.10" y="380.00" width="24.50" height="3.00" fill="#5a8cd6" /><rect x="293.10" y="383.00" width="24.50" height="40.50" fill="#99c077" /><rect x="322.10" y="378.50" width="25.70" height="45.00" fill="#101214" /><rect x="323.10" y="379.50" width="24.50" height="2.80" fill="#5a8cd6" /><rect x="323.10" y="382.30" width="24.50" height="41.20" fill="#99c077" /><rect x="352.10" y="376.90" width="25.70" height="46.60" fill="#101214" /><rect x="353.10" y="377.90" width="24.50" height="4.00" fill="#5a8cd6" /><rect x="353.10" y="381.90" width="24.50" height="41.60" fill="#99c077" /><rect x="382.10" y="390.70" width="25.70" height="32.80" fill="#101214" /><rect x="383.10" y="391.70" width="24.50" height="3.10" fill="#5a8cd6" /><rect x="383.10" y="394.80" width="24.50" height="28.70" fill="#99c077" /><rect x="412.10" y="376.90" width="25.70" height="46.60" fill="#101214" /><rect x="413.10" y="377.90" width="24.50" height="4.00" fill="#5a8cd6" /><rect x="413.10" y="381.90" width="24.50" height="41.60" fill="#99c077" /><rect x="442.10" y="376.90" width="25.70" height="46.60" fill="#101214" /><rect x="443.10" y="377.90" width="24.50" height="6.30" fill="#5a8cd6" /><rect x="443.10" y="384.20" width="24.50" height="39.30" fill="#99c077" /><rect x="472.10" y="409.50" width="25.70" height="14.00" fill="#101214" /><rect x="473.10" y="410.50" width="24.50" height="3.50" fill="#5a8cd6" /><rect x="473.10" y="414.00" width="24.50" height="9.50" fill="#99c077" /></g><text x="70.30" y="364.80" font-size="6.2" fill="#d8d8d8" text-anchor="end" font-weight="bold" >300</text><text x="70.30" y="385.00" font-size="6.2" fill="#d8d8d8" text-anchor="end" font-weight="bold" >200</text><text x="70.30" y="405.20" font-size="6.2" fill="#d8d8d8" text-anchor="end" font-weight="bold" >100</text><text x="70.30" y="425.50" font-size="6.2" fill="#d8d8d8" text-anchor="end" font-weight="bold" >0.0</text><text x="110.50" y="429.70" font-size="5.6" fill="#d8d8d8" text-anchor="middle" font-weight="bold" >Nov 3</text><text x="170.50" y="429.70" font-size="5.6" fill="#d8d8d8" text-anchor="middle" font-weight="bold" >Nov 5</text><text x="230.50" y="429.70" font-size="5.6" fill="#d8d8d8" text-anchor="middle" font-weight="bold" >Nov 7</text><text x="290.50" y="429.70" font-size="5.6" fill="#d8d8d8" text-anchor="middle" font-weight="bold" >Nov 9</text><text x="350.50" y="429.70" font-size="5.6" fill="#d8d8d8" text-anchor="middle" font-weight="bold" >Nov 11</text><text x="410.50" y="429.70" font-size="5.6" fill="#d8d8d8" text-anchor="middle" font-weight="bold" >Nov 13</text><text x="470.50" y="429.70" font-size="5.6" fill="#d8d8d8" text-anchor="middle" font-weight="bold" >Nov 15</text><text x="110.50" y="436.30" font-size="5.6" fill="#d8d8d8" text-anchor="middle" font-weight="bold" >2020</text><rect x="78.00" y="444.20" width="6.00" height="6.00" fill="#99c077" rx="1"/><text x="87.00" y="449.20" font-size="5.3" fill="#d8d8d8" text-anchor="start" font-weight="bold" >Downstream</text><rect x="127.00" y="444.20" width="6.00" height="6.00" fill="#5a8cd6" rx="1"/><text x="136.00" y="449.20" font-size="5.3" fill="#d8d8d8" text-anchor="start" font-weight="bold" >Upstream</text><text x="50.80" y="382.50" font-size="5.5" fill="#a0a0a0" text-anchor="middle" transform="rotate(-90 50.80 382.50)" dy="2">Bytes</text><line x1="540.20" y1="345.70" x2="957.00" y2="345.70" stroke="rgba(215,235,215,0.085)" stroke-width="0.8" /><line x1="540.20" y1="371.90" x2="957.00" y2="371.90" stroke="rgba(215,235,215,0.085)" stroke-width="0.8" /><line x1="540.20" y1="397.70" x2="957.00" y2="397.70" stroke="rgba(215,235,215,0.085)" stroke-width="0.8" /><line x1="540.20" y1="423.50" x2="957.00" y2="423.50" stroke="rgba(215,235,215,0.085)" stroke-width="0.8" /><line x1="585.90" y1="342.20" x2="585.90" y2="423.50" stroke="rgba(215,235,215,0.085)" stroke-width="0.8" /><line x1="640.67" y1="342.20" x2="640.67" y2="423.50" stroke="rgba(215,235,215,0.085)" stroke-width="0.8" /><line x1="695.44" y1="342.20" x2="695.44" y2="423.50" stroke="rgba(215,235,215,0.085)" stroke-width="0.8" /><line x1="750.21" y1="342.20" x2="750.21" y2="423.50" stroke="rgba(215,235,215,0.085)" stroke-width="0.8" /><line x1="804.98" y1="342.20" x2="804.98" y2="423.50" stroke="rgba(215,235,215,0.085)" stroke-width="0.8" /><line x1="859.75" y1="342.20" x2="859.75" y2="423.50" stroke="rgba(215,235,215,0.085)" stroke-width="0.8" /><line x1="914.52" y1="342.20" x2="914.52" y2="423.50" stroke="rgba(215,235,215,0.085)" stroke-width="0.8" /><rect x="909.20" y="344.20" width="48.80" height="79.30" fill="#101214" /><rect x="910.20" y="345.20" width="46.80" height="8.50" fill="#5a8cd6" /><rect x="910.20" y="353.70" width="46.80" height="69.80" fill="#99c077" /><text x="538.70" y="347.90" font-size="6.2" fill="#d8d8d8" text-anchor="end" font-weight="bold" >3000</text><text x="538.70" y="374.10" font-size="6.2" fill="#d8d8d8" text-anchor="end" font-weight="bold" >2000</text><text x="538.70" y="399.90" font-size="6.2" fill="#d8d8d8" text-anchor="end" font-weight="bold" >1000</text><text x="538.70" y="425.70" font-size="6.2" fill="#d8d8d8" text-anchor="end" font-weight="bold" >0.0</text><text x="585.90" y="429.70" font-size="5.6" fill="#d8d8d8" text-anchor="middle" font-weight="bold" >Aug 13</text><text x="640.67" y="429.70" font-size="5.6" fill="#d8d8d8" text-anchor="middle" font-weight="bold" >Aug 27</text><text x="695.44" y="429.70" font-size="5.6" fill="#d8d8d8" text-anchor="middle" font-weight="bold" >Sep 10</text><text x="750.21" y="429.70" font-size="5.6" fill="#d8d8d8" text-anchor="middle" font-weight="bold" >Sep 24</text><text x="804.98" y="429.70" font-size="5.6" fill="#d8d8d8" text-anchor="middle" font-weight="bold" >Oct 8</text><text x="859.75" y="429.70" font-size="5.6" fill="#d8d8d8" text-anchor="middle" font-weight="bold" >Oct 22</text><text x="914.52" y="429.70" font-size="5.6" fill="#d8d8d8" text-anchor="middle" font-weight="bold" >Nov 5</text><text x="585.90" y="436.30" font-size="5.6" fill="#d8d8d8" text-anchor="middle" font-weight="bold" >2020</text><rect x="546.70" y="444.20" width="6.00" height="6.00" fill="#99c077" rx="1"/><text x="555.70" y="449.20" font-size="5.3" fill="#d8d8d8" text-anchor="start" font-weight="bold" >Downstream</text><rect x="595.70" y="444.20" width="6.00" height="6.00" fill="#5a8cd6" rx="1"/><text x="604.70" y="449.20" font-size="5.3" fill="#d8d8d8" text-anchor="start" font-weight="bold" >Upstream</text><text x="519.00" y="382.50" font-size="5.5" fill="#a0a0a0" text-anchor="middle" transform="rotate(-90 519.00 382.50)" dy="2">Bytes</text><line x1="72.60" y1="527.00" x2="488.50" y2="527.00" stroke="rgba(215,235,215,0.085)" stroke-width="0.8" /><line x1="72.60" y1="544.60" x2="488.50" y2="544.60" stroke="rgba(215,235,215,0.085)" stroke-width="0.8" /><line x1="72.60" y1="561.60" x2="488.50" y2="561.60" stroke="rgba(215,235,215,0.085)" stroke-width="0.8" /><line x1="72.60" y1="578.60" x2="488.50" y2="578.60" stroke="rgba(215,235,215,0.085)" stroke-width="0.8" /><line x1="72.60" y1="596.00" x2="488.50" y2="596.00" stroke="rgba(215,235,215,0.085)" stroke-width="0.8" /><line x1="117.20" y1="515.20" x2="117.20" y2="596.00" stroke="rgba(215,235,215,0.085)" stroke-width="0.8" /><line x1="172.25" y1="515.20" x2="172.25" y2="596.00" stroke="rgba(215,235,215,0.085)" stroke-width="0.8" /><line x1="227.30" y1="515.20" x2="227.30" y2="596.00" stroke="rgba(215,235,215,0.085)" stroke-width="0.8" /><line x1="282.35" y1="515.20" x2="282.35" y2="596.00" stroke="rgba(215,235,215,0.085)" stroke-width="0.8" /><line x1="337.40" y1="515.20" x2="337.40" y2="596.00" stroke="rgba(215,235,215,0.085)" stroke-width="0.8" /><line x1="392.45" y1="515.20" x2="392.45" y2="596.00" stroke="rgba(215,235,215,0.085)" stroke-width="0.8" /><line x1="447.50" y1="515.20" x2="447.50" y2="596.00" stroke="rgba(215,235,215,0.085)" stroke-width="0.8" /><rect x="82.40" y="517.20" width="98.10" height="78.80" fill="#101214" /><rect x="83.40" y="518.20" width="96.10" height="4.80" fill="#5a8cd6" /><rect x="83.40" y="523.00" width="96.10" height="73.00" fill="#99c077" /><rect x="201.30" y="553.30" width="99.10" height="42.70" fill="#101214" /><rect x="202.30" y="554.30" width="97.10" height="4.20" fill="#5a8cd6" /><rect x="202.30" y="558.50" width="97.10" height="37.50" fill="#99c077" /><rect x="321.80" y="539.50" width="98.60" height="56.50" fill="#101214" /><rect x="322.80" y="540.50" width="96.60" height="3.90" fill="#5a8cd6" /><rect x="322.80" y="544.40" width="96.60" height="51.60" fill="#99c077" /><rect x="441.30" y="569.20" width="48.90" height="26.80" fill="#101214" /><rect x="442.30" y="570.20" width="46.90" height="3.10" fill="#5a8cd6" /><rect x="442.30" y="573.30" width="46.90" height="22.70" fill="#99c077" /><text x="71.10" y="529.20" font-size="6.2" fill="#d8d8d8" text-anchor="end" font-weight="bold" >8000</text><text x="71.10" y="546.80" font-size="6.2" fill="#d8d8d8" text-anchor="end" font-weight="bold" >6000</text><text x="71.10" y="563.80" font-size="6.2" fill="#d8d8d8" text-anchor="end" font-weight="bold" >4000</text><text x="71.10" y="580.80" font-size="6.2" fill="#d8d8d8" text-anchor="end" font-weight="bold" >2000</text><text x="71.10" y="598.20" font-size="6.2" fill="#d8d8d8" text-anchor="end" font-weight="bold" >0.0</text><text x="117.20" y="601.50" font-size="5.6" fill="#d8d8d8" text-anchor="middle" font-weight="bold" >Aug 13</text><text x="172.25" y="601.50" font-size="5.6" fill="#d8d8d8" text-anchor="middle" font-weight="bold" >Aug 27</text><text x="227.30" y="601.50" font-size="5.6" fill="#d8d8d8" text-anchor="middle" font-weight="bold" >Sep 10</text><text x="282.35" y="601.50" font-size="5.6" fill="#d8d8d8" text-anchor="middle" font-weight="bold" >Sep 24</text><text x="337.40" y="601.50" font-size="5.6" fill="#d8d8d8" text-anchor="middle" font-weight="bold" >Oct 8</text><text x="392.45" y="601.50" font-size="5.6" fill="#d8d8d8" text-anchor="middle" font-weight="bold" >Oct 22</text><text x="447.50" y="601.50" font-size="5.6" fill="#d8d8d8" text-anchor="middle" font-weight="bold" >Nov 5</text><text x="117.20" y="608.10" font-size="5.6" fill="#d8d8d8" text-anchor="middle" font-weight="bold" >2020</text><rect x="79.10" y="616.80" width="6.00" height="6.00" fill="#99c077" rx="1"/><text x="88.10" y="621.80" font-size="5.3" fill="#d8d8d8" text-anchor="start" font-weight="bold" >Downstream</text><rect x="128.10" y="616.80" width="6.00" height="6.00" fill="#5a8cd6" rx="1"/><text x="137.10" y="621.80" font-size="5.3" fill="#d8d8d8" text-anchor="start" font-weight="bold" >Upstream</text><text x="52.30" y="555.00" font-size="5.5" fill="#a0a0a0" text-anchor="middle" transform="rotate(-90 52.30 555.00)" dy="2">Bytes</text></g></svg>
</body></html>
